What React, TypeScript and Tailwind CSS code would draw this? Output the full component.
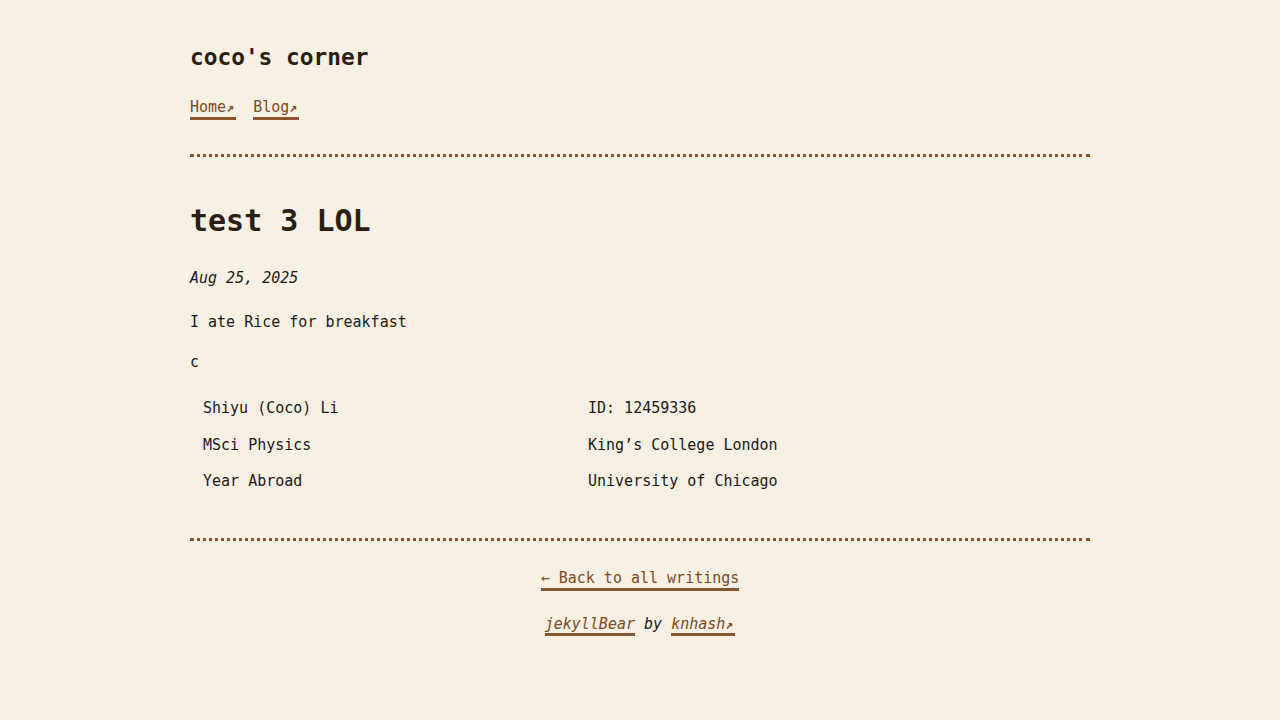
import React from "react";

const Arrow = () => (
  <span className="inline-block w-[10px] text-[13px] font-bold align-baseline">↗</span>
);

export default function App() {
  return (
    <div
      className="min-h-screen bg-[#f7f0e4] text-[#1c1a17]"
      style={{ fontFamily: '"DejaVu Sans Mono", "Liberation Mono", monospace' }}
    >
      <div className="w-[900px] mx-auto pt-[42px] text-[15px] leading-[20px]">
        <header>
          <div className="text-[22.8px] leading-[30px] font-bold text-[#2b1e12]">coco's corner</div>
          <nav className="mt-[26px] flex gap-[17px] leading-[19px]">
            <a className="text-[#7e4a1f] border-b-[3px] border-[#8b5530]">
              Home<Arrow />
            </a>
            <a className="text-[#7e4a1f] border-b-[3px] border-[#8b5530]">
              Blog<Arrow />
            </a>
          </nav>
        </header>
        <div className="mt-[34px] border-t-[3px] border-dotted border-[#8b5530]" />
        <main>
          <h1 className="mt-[44px] text-[30px] leading-[40px] font-bold text-[#2b1e12]">test 3 LOL</h1>
          <p className="mt-[27px] italic">Aug 25, 2025</p>
          <p className="mt-[24px]">I ate Rice for breakfast</p>
          <p className="mt-[20px]">c</p>
          <div className="mt-[18px] grid grid-cols-[385px_1fr]">
            <div className="h-[36px] flex items-center pl-[13px]">Shiyu (Coco) Li</div>
            <div className="h-[36px] flex items-center pl-[13px]">ID: 12459336</div>
            <div className="h-[37px] flex items-center pl-[13px]">MSci Physics</div>
            <div className="h-[37px] flex items-center pl-[13px]">King’s College London</div>
            <div className="h-[36px] flex items-center pl-[13px]">Year Abroad</div>
            <div className="h-[36px] flex items-center pl-[13px]">University of Chicago</div>
          </div>
        </main>
        <div className="mt-[39px] border-t-[3px] border-dotted border-[#8b5530]" />
        <footer className="flex flex-col items-center">
          <a className="mt-[27px] text-[#7e4a1f] border-b-[3px] border-[#8b5530]">← Back to all writings</a>
          <p className="mt-[23px] italic">
            <a className="text-[#7e4a1f] border-b-[3px] border-[#8b5530]">jekyllBear</a> by{" "}
            <a className="text-[#7e4a1f] border-b-[3px] border-[#8b5530]">
              knhash<Arrow />
            </a>
          </p>
        </footer>
      </div>
    </div>
  );
}
